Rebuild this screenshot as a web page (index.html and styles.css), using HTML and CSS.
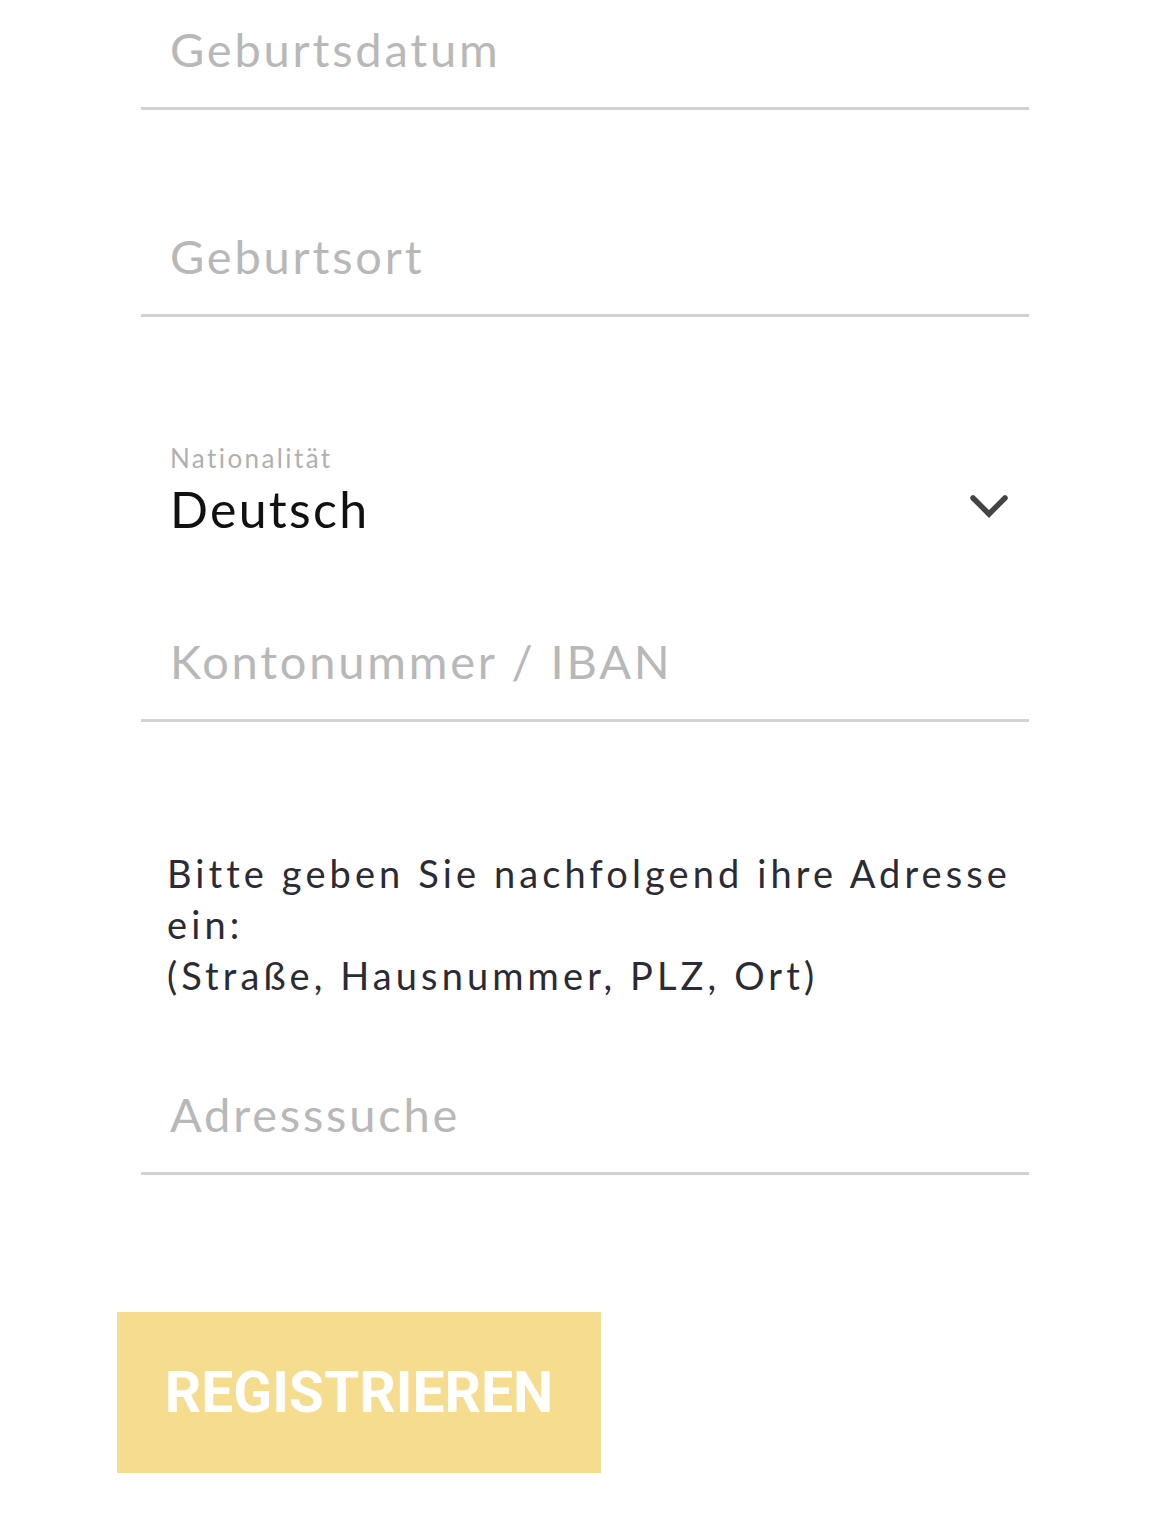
FILE: index.html
```html
<!DOCTYPE html>
<html lang="de">
<head>
<meta charset="utf-8">
<title>Registrierung</title>
<link rel="stylesheet" href="styles.css">
</head>
<body>
<main class="form">
  <div class="field field-first"><span class="placeholder">Geburtsdatum</span></div>
  <div class="field"><span class="placeholder">Geburtsort</span></div>
  <div class="select">
    <div class="select-text">
      <span class="select-label">Nationalität</span>
      <span class="select-value">Deutsch</span>
    </div>
    <svg class="chevron" width="40" height="30" viewBox="0 0 40 30" aria-hidden="true">
      <polyline points="4,6 20,22 36,6" fill="none" stroke="#444" stroke-width="5.5" stroke-linecap="round" stroke-linejoin="miter"/>
    </svg>
  </div>
  <div class="field field-iban"><span class="placeholder">Kontonummer / IBAN</span></div>
  <p class="hint">Bitte geben Sie nachfolgend ihre Adresse ein:<br>(Straße, Hausnummer, PLZ, Ort)</p>
  <div class="field field-address"><span class="placeholder">Adresssuche</span></div>
  <div class="actions">
    <button class="btn" type="button">REGISTRIEREN</button>
  </div>
</main>
</body>
</html>
```
FILE: styles.css
```css
html, body {
  margin: 0;
  padding: 0;
  background: #ffffff;
}

body {
  font-family: Lato, "Open Sans", "Liberation Sans", sans-serif;
}

.form {
  width: 888px;
  margin-left: 141px;
  display: flex;
  flex-direction: column;
}

.field {
  padding: 122px 29px 34px;
  border-bottom: 3px solid #d2d2d2;
  line-height: 48px;
  height: 48px;
}

.field-first {
  padding-top: 25px;
}

.placeholder {
  font-size: 47px;
  color: #b8b8b8;
  letter-spacing: 2.8px;
}

.select {
  display: flex;
  align-items: center;
  justify-content: space-between;
  padding: 126px 20px 0 29px;
}

.select-text {
  display: flex;
  flex-direction: column;
}

.select-label {
  font-size: 26px;
  line-height: 30px;
  color: #b0b0b0;
  letter-spacing: 2.4px;
}

.select-value {
  font-size: 50px;
  line-height: 60px;
  margin-top: 6px;
  color: #111111;
  letter-spacing: 2.3px;
}

.chevron {
  display: block;
  margin-top: 32px;
}

.field-iban {
  padding-top: 98px;
}

.hint {
  margin: 126px 0 0 26px;
  width: 860px;
  font-size: 38px;
  line-height: 51px;
  color: #2b2b35;
  letter-spacing: 4.1px;
}

.field-address {
  padding-top: 89px;
}

.actions {
  margin-top: 137px;
  margin-left: -24px;
}

.btn {
  display: block;
  width: 484px;
  height: 161px;
  border: none;
  border-radius: 0;
  background: #f6dc8e;
  color: #ffffff;
  font-family: Roboto, "Liberation Sans", sans-serif;
  font-weight: 700;
  font-size: 57px;
  letter-spacing: 0;
  padding: 0;
}
```
